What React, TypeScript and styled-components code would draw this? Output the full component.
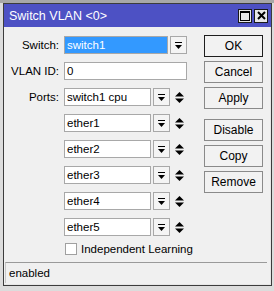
import { FC, Fragment } from 'react'
import styled, { createGlobalStyle } from 'styled-components'

const GlobalStyle = createGlobalStyle`
  html, body {
    margin: 0;
    padding: 0;
    background: #d9d9d9;
  }
  body {
    font-family: 'Liberation Sans', Arial, sans-serif;
    font-size: 11.5px;
    color: #000;
  }
`

const Desktop = styled.div`
  width: 274px;
  height: 291px;
  padding: 3px 2px 5px 3px;
  box-sizing: border-box;
  background: linear-gradient(#a8a8a8 0 3px, #dcdcdc 3px);
  overflow: hidden;
`

const Window = styled.div`
  width: 269px;
  height: 283px;
  box-sizing: border-box;
  display: flex;
  flex-direction: column;
  background: #f0f0f0;
  border: 1px solid #3c3c3c;
  box-shadow: inset -1px -1px 0 #e6e6e6;
`

const TitleBar = styled.div`
  height: 23px;
  flex: none;
  display: flex;
  align-items: center;
  justify-content: space-between;
  padding: 0 3px 0 5px;
  background: #4d51c4;
  color: #fff;
  font-size: 12.5px;
`

const TitleButtons = styled.div`
  display: flex;
  gap: 2px;
`

const TitleButton = styled.div`
  width: 14px;
  height: 14px;
  box-sizing: border-box;
  border: 1px solid #1a1a1a;
  background: #e8e8e8;
  display: flex;
  align-items: center;
  justify-content: center;
`

const Body = styled.div`
  flex: 1;
  display: flex;
  padding: 8px 8px 0 0;
`

const Form = styled.div`
  display: grid;
  grid-template-columns: 55px auto;
  column-gap: 5px;
  row-gap: 8px;
  align-content: start;
  padding-top: 1px;
`

const Label = styled.div`
  text-align: right;
  line-height: 18px;
  height: 18px;
`

const Field = styled.div`
  display: flex;
  align-items: center;
  height: 18px;
`

const Input = styled.div<{ $width: number; $selected?: boolean }>`
  width: ${({ $width }) => $width}px;
  height: 18px;
  box-sizing: border-box;
  border: 1px solid #a8a8a8;
  background: ${({ $selected }) => ($selected ? '#3399ff' : '#fff')};
  color: ${({ $selected }) => ($selected ? '#fff' : '#000')};
  padding: 0 2px;
  line-height: 16px;
  white-space: nowrap;
  overflow: hidden;
`

const DropButton = styled.div`
  width: 17px;
  height: 18px;
  margin-left: 2px;
  box-sizing: border-box;
  border: 1px solid #a8a8a8;
  background: #f4f4f4;
  display: flex;
  align-items: center;
  justify-content: center;
`

const Mover = styled.div`
  width: 10px;
  margin-left: 4px;
  display: flex;
  align-items: center;
  justify-content: center;
`

const CheckRow = styled.label`
  display: flex;
  align-items: center;
  gap: 4px;
  height: 14px;
  margin-top: -2px;
`

const CheckBox = styled.span`
  width: 12px;
  height: 12px;
  box-sizing: border-box;
  border: 1px solid #a0a0a0;
  background: #fff;
  margin-left: 1px;
`

const ButtonColumn = styled.div`
  margin-left: auto;
  display: flex;
  flex-direction: column;
  gap: 4px;
`

const Button = styled.div<{ $default?: boolean; $gapBefore?: boolean }>`
  width: 59px;
  height: 22px;
  box-sizing: border-box;
  border: 1px solid ${({ $default }) => ($default ? '#1e1e1e' : '#8a8a8a')};
  background: #f2f2f2;
  font-size: 12px;
  display: flex;
  align-items: center;
  justify-content: center;
  margin-top: ${({ $gapBefore }) => ($gapBefore ? '6px' : '0')};
`

const StatusBar = styled.div`
  height: 20px;
  flex: none;
  margin: 0 4px 2px 1px;
  border-top: 1px solid #9a9a9a;
  border-left: 1px solid #c8c8c8;
  padding-left: 3px;
  line-height: 20px;
`

const DropIcon: FC = () => (
  <svg width="9" height="9" viewBox="0 0 9 9">
    <rect x="1" y="1" width="7" height="1" fill="#000" />
    <polygon points="1,4 8,4 4.5,8" fill="#000" />
  </svg>
)

const UpDownIcon: FC = () => (
  <svg width="9" height="13" viewBox="0 0 9 13">
    <polygon points="4.5,1 9,5.5 0,5.5" fill="#000" />
    <polygon points="0,7.5 9,7.5 4.5,12" fill="#000" />
  </svg>
)

const ports = ['switch1 cpu', 'ether1', 'ether2', 'ether3', 'ether4', 'ether5']

const App: FC = () => {
  return (
    <Desktop>
      <GlobalStyle />
      <Window>
        <TitleBar>
          <span>Switch VLAN &lt;0&gt;</span>
          <TitleButtons>
            <TitleButton>
              <svg width="10" height="10" viewBox="0 0 10 10">
                <rect x="0.5" y="0.5" width="9" height="9" fill="none" stroke="#000" />
                <rect x="0" y="0" width="10" height="2" fill="#000" />
              </svg>
            </TitleButton>
            <TitleButton>
              <svg width="9" height="9" viewBox="0 0 9 9">
                <path d="M1 1 L8 8 M8 1 L1 8" stroke="#000" strokeWidth="2" />
              </svg>
            </TitleButton>
          </TitleButtons>
        </TitleBar>
        <Body>
          <Form>
            <Label>Switch:</Label>
            <Field>
              <Input $width={104} $selected>switch1</Input>
              <DropButton>
                <DropIcon />
              </DropButton>
            </Field>
            <Label>VLAN ID:</Label>
            <Field>
              <Input $width={123}>0</Input>
            </Field>
            {ports.map((port, i) => (
              <Fragment key={port}>
                <Label>{i === 0 ? 'Ports:' : ''}</Label>
                <Field>
                  <Input $width={87}>{port}</Input>
                  <DropButton>
                    <DropIcon />
                  </DropButton>
                  <Mover>
                    <UpDownIcon />
                  </Mover>
                </Field>
              </Fragment>
            ))}
            <span />
            <CheckRow>
              <CheckBox />
              Independent Learning
            </CheckRow>
          </Form>
          <ButtonColumn>
            <Button $default>OK</Button>
            <Button>Cancel</Button>
            <Button>Apply</Button>
            <Button $gapBefore>Disable</Button>
            <Button>Copy</Button>
            <Button>Remove</Button>
          </ButtonColumn>
        </Body>
        <StatusBar>enabled</StatusBar>
      </Window>
    </Desktop>
  )
}

export default App
